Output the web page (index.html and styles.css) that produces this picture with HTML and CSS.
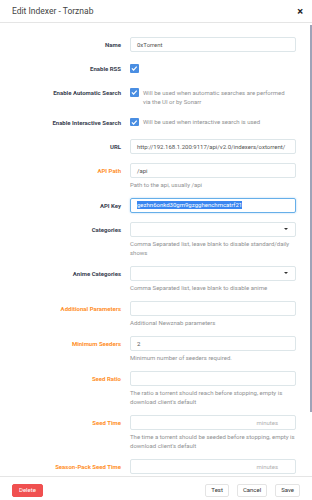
FILE: index.html
```html
<!DOCTYPE html>
<html lang="en">
<head>
    <meta charset="UTF-8">
    <meta name="viewport" content="width=device-width, initial-scale=1.0">
    <title>Edit Indexer - Torznab</title>
    <link rel="stylesheet" href="styles.css">
</head>
<body>
    <div class="modal">
        <div class="modal-header">
            <span class="title">Edit Indexer - Torznab</span>
            <span class="close">&times;</span>
        </div>
        <div class="modal-body">
            <div class="form-group">
                <div class="label">Name</div>
                <div class="field"><div class="input">0xTorrent</div></div>
            </div>
            <div class="form-group">
                <div class="label">Enable RSS</div>
                <div class="field check-row">
                    <span class="checkbox"><svg viewBox="0 0 10 10"><path d="M2.2 5.2 L4.2 7.1 L7.9 3" /></svg></span>
                </div>
            </div>
            <div class="form-group">
                <div class="label">Enable Automatic Search</div>
                <div class="field check-row">
                    <span class="checkbox"><svg viewBox="0 0 10 10"><path d="M2.2 5.2 L4.2 7.1 L7.9 3" /></svg></span>
                    <span class="check-help">Will be used when automatic searches are performed via the UI or by Sonarr</span>
                </div>
            </div>
            <div class="form-group">
                <div class="label">Enable Interactive Search</div>
                <div class="field check-row">
                    <span class="checkbox"><svg viewBox="0 0 10 10"><path d="M2.2 5.2 L4.2 7.1 L7.9 3" /></svg></span>
                    <span class="check-help">Will be used when interactive search is used</span>
                </div>
            </div>
            <div class="form-group">
                <div class="label">URL</div>
                <div class="field"><div class="input">http://192.168.1.200:9117/api/v2.0/indexers/oxtorrent/</div></div>
            </div>
            <div class="form-group">
                <div class="label advanced">API Path</div>
                <div class="field">
                    <div class="input">/api</div>
                    <div class="help">Path to the api, usually /api</div>
                </div>
            </div>
            <div class="form-group">
                <div class="label">API Key</div>
                <div class="field"><div class="input focused"><span class="selected">gezhn6onkd30gm9gzgghenchmcatrf21</span></div></div>
            </div>
            <div class="form-group">
                <div class="label">Categories</div>
                <div class="field">
                    <div class="input select"><span class="caret"></span></div>
                    <div class="help">Comma Separated list, leave blank to disable standard/daily shows</div>
                </div>
            </div>
            <div class="form-group">
                <div class="label">Anime Categories</div>
                <div class="field">
                    <div class="input select"><span class="caret"></span></div>
                    <div class="help">Comma Separated list, leave blank to disable anime</div>
                </div>
            </div>
            <div class="form-group">
                <div class="label advanced">Additional Parameters</div>
                <div class="field">
                    <div class="input"></div>
                    <div class="help">Additional Newznab parameters</div>
                </div>
            </div>
            <div class="form-group">
                <div class="label advanced">Minimum Seeders</div>
                <div class="field">
                    <div class="input">2</div>
                    <div class="help">Minimum number of seeders required.</div>
                </div>
            </div>
            <div class="form-group">
                <div class="label advanced">Seed Ratio</div>
                <div class="field">
                    <div class="input"></div>
                    <div class="help">The ratio a torrent should reach before stopping, empty is download client's default</div>
                </div>
            </div>
            <div class="form-group">
                <div class="label advanced">Seed Time</div>
                <div class="field">
                    <div class="input unit"><span class="unit-text">minutes</span></div>
                    <div class="help">The time a torrent should be seeded before stopping, empty is download client's default</div>
                </div>
            </div>
            <div class="form-group">
                <div class="label advanced">Season-Pack Seed Time</div>
                <div class="field">
                    <div class="input unit"><span class="unit-text">minutes</span></div>
                </div>
            </div>
            <div class="scroll-thumb"></div>
        </div>
        <div class="modal-footer">
            <button class="btn danger">Delete</button>
            <div class="right-buttons">
                <button class="btn">Test</button>
                <button class="btn">Cancel</button>
                <button class="btn">Save</button>
            </div>
        </div>
    </div>
</body>
</html>
```

FILE: styles.css
```css
body {
    margin: 0;
    background: #fff;
    font-family: Roboto, "Open Sans", sans-serif;
    color: #515253;
}
.modal {
    width: 312px;
    height: 500px;
    display: flex;
    flex-direction: column;
    overflow: hidden;
}
.modal-header {
    height: 22px;
    flex: none;
    display: flex;
    align-items: center;
    justify-content: space-between;
    padding: 0 9px 0 12px;
    border-bottom: 1px solid #e5e5e5;
}
.modal-header .title {
    font-size: 8.5px;
    color: #444;
}
.modal-header .close {
    font-size: 11px;
    font-weight: bold;
    color: #222;
}
.modal-body {
    position: relative;
    height: 453px;
    flex: none;
    overflow: hidden;
    padding: 14px 16px 0 0;
    box-sizing: border-box;
}
/* scrollbar thumb drawn over the right edge */
.scroll-thumb {
    position: absolute;
    top: 2px;
    right: 0;
    width: 2.5px;
    height: 387px;
    background: #9ea3b8;
}
.form-group {
    display: flex;
    margin-bottom: 9px;
    font-size: 6px;
}
.label {
    width: 121px;
    flex: none;
    text-align: right;
    font-weight: bold;
    color: #3a3f51;
    line-height: 15px;
    margin-right: 9px;
}
.label.advanced {
    color: #ff902b;
}
.field {
    flex: 1;
    min-width: 0;
}
.input {
    height: 15px;
    box-sizing: border-box;
    border: 1px solid #dde6e9;
    border-radius: 2px;
    padding: 0 6px;
    line-height: 13px;
    color: #555;
    white-space: nowrap;
    overflow: hidden;
    display: flex;
    align-items: center;
}
.input.focused {
    border-color: #66afe9;
    box-shadow: 0 0 2px rgba(102, 175, 233, 0.6);
}
.selected {
    background: #3a86f0;
    color: #fff;
    line-height: 8px;
}
.input.select {
    justify-content: flex-end;
    padding-right: 7px;
}
.caret {
    width: 0;
    height: 0;
    border-left: 2px solid transparent;
    border-right: 2px solid transparent;
    border-top: 2px solid #333;
}
.input.unit {
    justify-content: flex-end;
    padding-right: 17px;
}
.unit-text {
    color: #b0b0b0;
}
.help {
    margin-top: 2px;
    line-height: 9px;
    color: #909293;
}
.check-row {
    display: flex;
    align-items: flex-start;
}
.checkbox {
    width: 8.5px;
    height: 8.5px;
    margin-top: 3px;
    flex: none;
    background: #4a8ee2;
    border-radius: 1px;
}
.checkbox svg {
    display: block;
    width: 100%;
    height: 100%;
}
.checkbox path {
    fill: none;
    stroke: #fff;
    stroke-width: 1.4;
}
.check-help {
    margin-left: 4.5px;
    padding-top: 2.5px;
    line-height: 9px;
    color: #909293;
    padding-right: 6px;
}
.modal-footer {
    flex: 1;
    border-top: 1px solid #e5e5e5;
    display: flex;
    justify-content: space-between;
    align-items: flex-start;
    padding: 7px 12px 0 12px;
}
.right-buttons {
    display: flex;
    gap: 8px;
}
.btn {
    height: 12.5px;
    padding: 0 5px;
    font-family: Roboto, sans-serif;
    font-size: 6px;
    line-height: 10px;
    color: #333;
    background: #fff;
    border: 1px solid #e4e4e4;
    border-radius: 2px;
}
.btn.danger {
    background: #f05050;
    border-color: #f05050;
    color: #fff;
    padding: 0 6px;
}
```
